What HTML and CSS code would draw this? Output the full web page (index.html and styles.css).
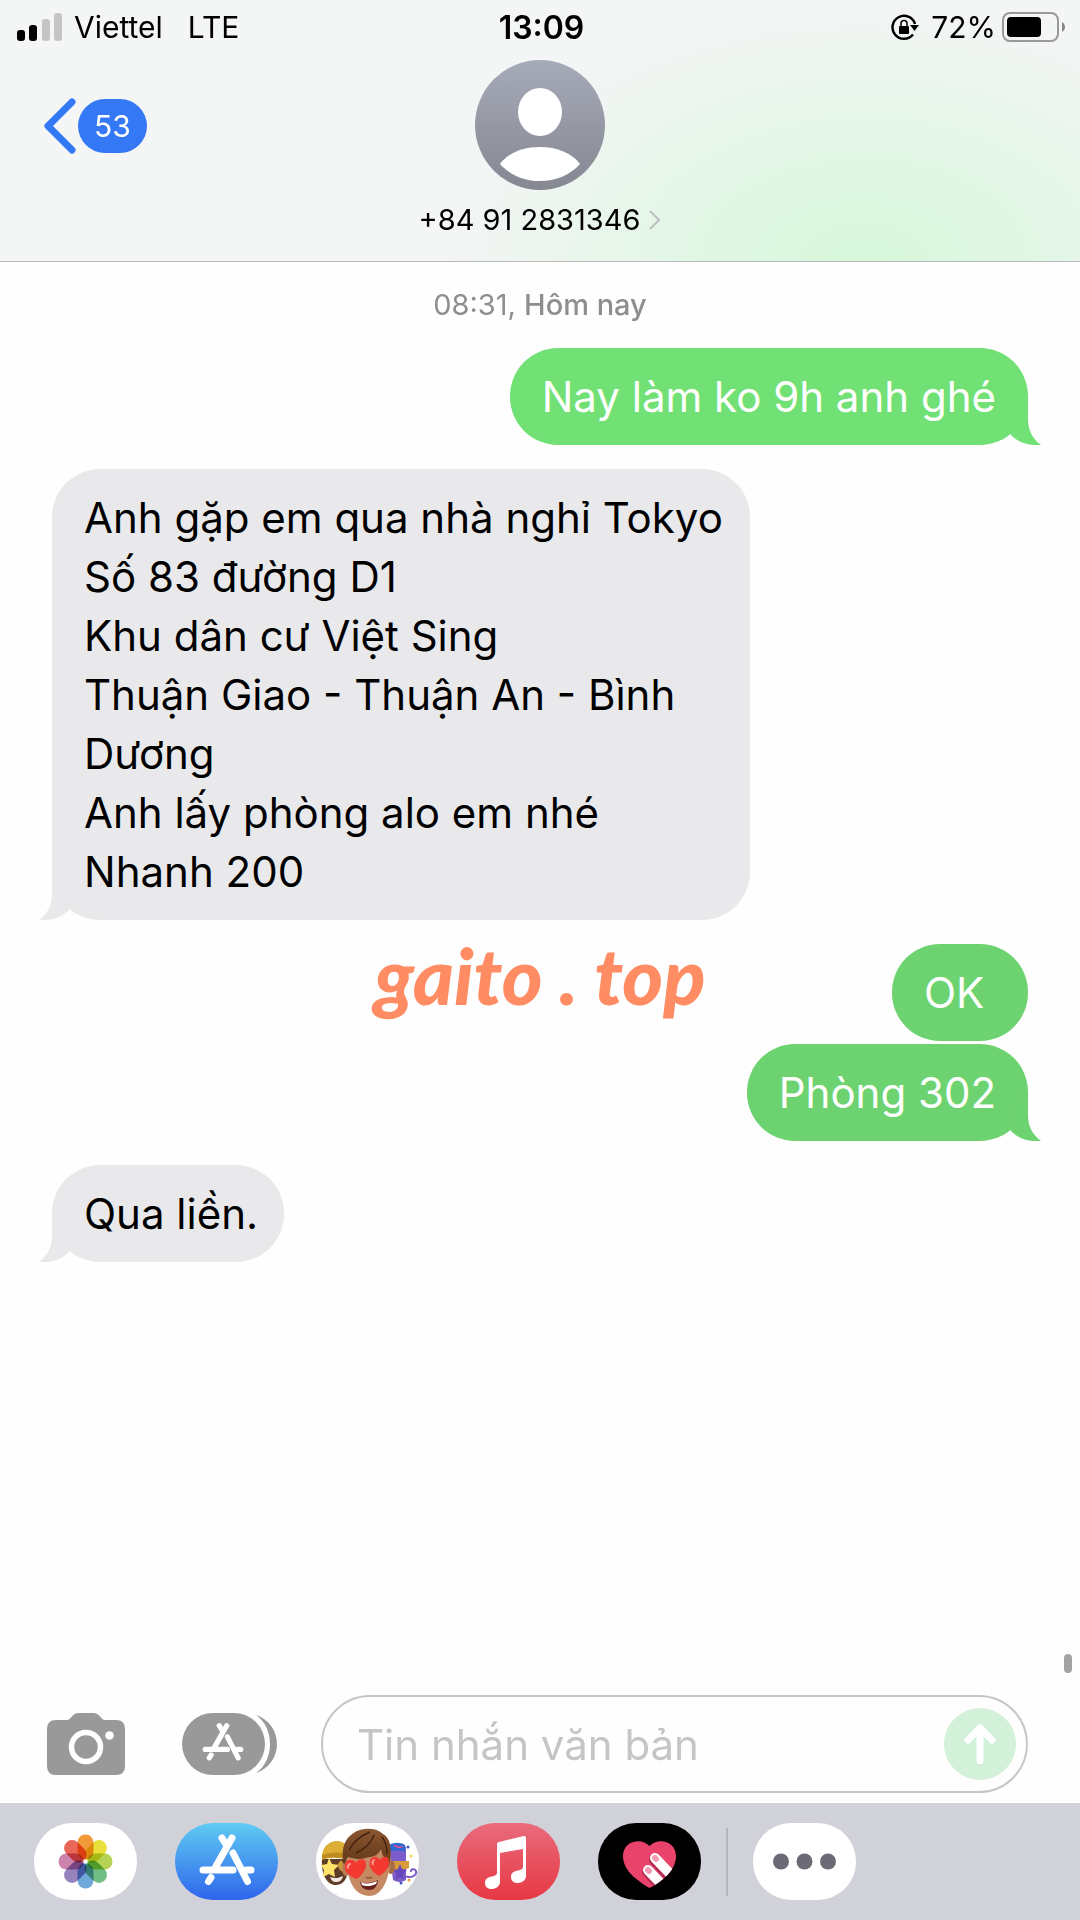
FILE: index.html
```
<!DOCTYPE html>
<html lang="vi">
<head>
  <meta charset="UTF-8">
  <title>Tin nhắn</title>
  <meta name="viewport" content="width=device-width, initial-scale=1">
  <link rel="stylesheet" href="styles.css">
</head>
<body>
  <header class="header">
    <div class="status-bar">
      <div class="status-left">
        <svg width="46" height="28" viewBox="0 0 46 28" aria-hidden="true">
          <rect x="0" y="17" width="8" height="11" rx="3"/>
          <rect x="12" y="12" width="8" height="16" rx="3"/>
          <rect x="25" y="6" width="8" height="22" rx="3" fill="#c5c5c5"/>
          <rect x="37" y="0" width="8" height="28" rx="3" fill="#c5c5c5"/>
        </svg>
        <span>Viettel</span>
        <span class="network">LTE</span>
      </div>
      <time class="clock">13:09</time>
      <div class="status-right">
        <svg width="28" height="28" viewBox="0 0 28 28" aria-hidden="true">
          <path d="M24 11A11.500 11.500 0 1 0 22 21.500" fill="none" stroke="#000" stroke-width="2.500"/>
          <path d="M19 12h9l-4.500 6z"/>
          <rect x="8" y="13" width="10" height="8" rx="1"/>
          <path d="M10 13v-2.500a3 3 0 0 1 6 0V13" fill="none" stroke="#000" stroke-width="1.500"/>
        </svg>
        <span class="percent">72%</span>
        <svg width="64" height="32" viewBox="0 0 64 32" aria-hidden="true">
          <rect x="1" y="2" width="55" height="28" rx="7" fill="none" stroke="#999" stroke-width="2"/>
          <rect x="5" y="6" width="34" height="20" rx="4"/>
          <path d="M60 11c4 2 4 8 0 10z" fill="#888"/>
        </svg>
      </div>
    </div>
    <nav class="nav">
      <a class="back" href="#" aria-label="Quay lại, 53 tin chưa đọc">
        <svg width="34" height="56" viewBox="0 0 34 56" aria-hidden="true">
          <path d="M28 4L4 28l24 24" fill="none" stroke="#3478f6" stroke-width="7" stroke-linecap="round" stroke-linejoin="round"/>
        </svg>
        <span class="badge">53</span>
      </a>
      <a class="contact" href="#">
        <svg width="130" height="130" viewBox="0 0 130 130" aria-hidden="true">
          <defs>
            <linearGradient id="avatar" x1="0" y1="0" x2="0" y2="1">
              <stop offset="0" stop-color="#a6abb8"/>
              <stop offset="1" stop-color="#858791"/>
            </linearGradient>
          </defs>
          <circle cx="65" cy="65" r="65" fill="url(#avatar)"/>
          <ellipse cx="65" cy="52" rx="22" ry="24" fill="#fff"/>
          <path d="M25 104C33 93 48 87 65 87s32 6 40 17c-10 11-24 17-40 17s-30-6-40-17z" fill="#fff"/>
        </svg>
        <span class="contact-name">+84 91 2831346
          <svg width="12" height="22" viewBox="0 0 12 22" aria-hidden="true">
            <path d="M1 2l9 9-9 9" fill="none" stroke="#bcc1bf" stroke-width="2"/>
          </svg>
        </span>
      </a>
    </nav>
  </header>

  <main class="messages">
    <p class="date">08:31, <b>Hôm nay</b></p>
    <div class="bubble sent">Nay làm ko 9h anh ghé
      <svg class="tail" width="40" height="48" viewBox="0 0 40 48" aria-hidden="true"><path d="M20 0h7v22c0 12 5 20 13 26-14 1-23-3-30-10l-2-8z"/></svg>
    </div>
    <div class="bubble received">Anh gặp em qua nhà nghỉ Tokyo<br>Số 83 đường D1<br>Khu dân cư Việt Sing<br>Thuận Giao - Thuận An - Bình Dương<br>Anh lấy phòng alo em nhé<br>Nhanh 200
      <svg class="tail" width="40" height="48" viewBox="0 0 40 48" aria-hidden="true"><path d="M20 0h-7v22c0 12-5 20-13 26 14 1 23-3 30-10l2-8z"/></svg>
    </div>
    <div class="sent-group">
      <div class="bubble sent darker">OK</div>
      <div class="bubble sent darker">Phòng 302
        <svg class="tail" width="40" height="48" viewBox="0 0 40 48" aria-hidden="true"><path d="M20 0h7v22c0 12 5 20 13 26-14 1-23-3-30-10l-2-8z"/></svg>
      </div>
      <span class="watermark">gaito . top</span>
    </div>
    <div class="bubble received">Qua liền.
      <svg class="tail" width="40" height="48" viewBox="0 0 40 48" aria-hidden="true"><path d="M20 0h-7v22c0 12-5 20-13 26 14 1 23-3 30-10l2-8z"/></svg>
    </div>
    <span class="scroll-thumb"></span>
  </main>

  <form class="composer">
    <button class="icon-button" type="button" aria-label="Máy ảnh">
      <svg width="78" height="62" viewBox="0 0 78 62">
        <path d="M9 7h11c4 0 5-7 12-7h14c7 0 8 7 12 7h11q9 0 9 9v37q0 9-9 9H9q-9 0-9-9V16q0-9 9-9z" fill="#999"/>
        <circle cx="39" cy="34" r="14.500" fill="none" stroke="#fff" stroke-width="5.500"/>
        <circle cx="62.500" cy="22.500" r="4.300" fill="#fff"/>
      </svg>
    </button>
    <button class="icon-button" type="button" aria-label="Ứng dụng">
      <svg width="95" height="62" viewBox="0 0 95 62">
        <rect width="83" height="62" rx="31" fill="#999"/>
        <path d="M74 2c12 4 21 15 21 29s-9 25-21 29c9-6 14-17 14-29S83 8 74 2z" fill="#999"/>
        <g transform="translate(2.500 1.600) scale(.74)" fill="none" stroke="#fff" stroke-width="7" stroke-linecap="round" stroke-linejoin="round">
          <path d="M47 15l5 8M57 15L40 45M28 47h30M71 47h5M36 54.500l-2.500 4"/>
          <path d="M58 30l14.500 28.500"/>
        </g>
      </svg>
    </button>
    <div class="field">
      <input type="text" placeholder="Tin nhắn văn bản" aria-label="Tin nhắn văn bản">
      <button class="send" type="submit" aria-label="Gửi">
        <svg width="32" height="40" viewBox="0 0 32 40">
          <path d="M16 37V5M4 16L16 4l12 12" fill="none" stroke="#fff" stroke-width="7" stroke-linecap="round" stroke-linejoin="round"/>
        </svg>
      </button>
    </div>
  </form>

  <footer class="dock">
    <button class="app" type="button" aria-label="Ảnh">
      <svg viewBox="0 0 103 77">
        <rect width="103" height="77" rx="38" fill="#fff"/>
        <g class="petals" transform="translate(51.500 38.500)">
          <rect x="-8" y="-27" width="16" height="25" rx="8" fill="#f09b37"/>
          <rect x="-8" y="-27" width="16" height="25" rx="8" fill="#e9e03b" transform="rotate(45)"/>
          <rect x="-8" y="-27" width="16" height="25" rx="8" fill="#b5d254" transform="rotate(90)"/>
          <rect x="-8" y="-27" width="16" height="25" rx="8" fill="#72bd84" transform="rotate(135)"/>
          <rect x="-8" y="-27" width="16" height="25" rx="8" fill="#6fa8d9" transform="rotate(180)"/>
          <rect x="-8" y="-27" width="16" height="25" rx="8" fill="#9583bd" transform="rotate(225)"/>
          <rect x="-8" y="-27" width="16" height="25" rx="8" fill="#cd83ad" transform="rotate(270)"/>
          <rect x="-8" y="-27" width="16" height="25" rx="8" fill="#e96758" transform="rotate(315)"/>
        </g>
      </svg>
    </button>
    <button class="app" type="button" aria-label="App Store">
      <svg viewBox="0 0 103 77">
        <defs>
          <linearGradient id="store" x1="0" y1="0" x2="0" y2="1">
            <stop offset="0" stop-color="#5fcbf3"/>
            <stop offset="1" stop-color="#2f65ec"/>
          </linearGradient>
        </defs>
        <rect width="103" height="77" rx="38" fill="url(#store)"/>
        <g fill="none" stroke="#fff" stroke-width="7" stroke-linecap="round" stroke-linejoin="round">
          <path d="M47 15l5 8M57 15L40 45M28 47h30M71 47h5M36 54.500l-2.500 4"/>
          <path d="M58 30l14.500 28.500"/>
        </g>
      </svg>
    </button>
    <button class="app" type="button" aria-label="Memoji">
      <svg viewBox="0 0 103 77">
        <defs>
          <linearGradient id="hair" x1="0" y1="0" x2="0" y2="1">
            <stop offset="0" stop-color="#8a5630"/>
            <stop offset="1" stop-color="#5e3417"/>
          </linearGradient>
        </defs>
        <rect width="103" height="77" rx="38" fill="#fff"/>
        <!-- beanie face -->
        <path d="M6 36c-1 16 5 26 14 26s13-9 13-26z" fill="#5f3c26"/>
        <path d="M6 34c0-10 7-16 15-16 7 0 12 5 12 14v6c-9-4-18-4-27-1z" fill="#dcae35"/>
        <path d="M6 32c9-3 18-3 27-1v6c-9-3-18-3-27-1z" fill="#c08c20"/>
        <path d="M13 35l3 6 7 1-5 5 1 7-6-3-6 3 1-7-3-5 6-1z" fill="#ffe36a"/>
        <path d="M25 37l3 4 5 1v7l-5 1-4-3-3-5z" fill="#c89a3c"/>
        <path d="M14 54c5 2 9 1 13-1-1 5-4 6-7 6s-5-2-6-5z" fill="#f4e9e2"/>
        <!-- purple robot -->
        <path d="M73 24c5-4 13-4 17 0v33c-3 2-8 3-13 0z" fill="#7c5ccb"/>
        <path d="M73 22c5-3 12-3 16 0v7c-5-2-11-2-16 0z" fill="#2d6bd3"/>
        <path d="M78 22c3 3 6 3 9 1" fill="none" stroke="#df4b8e" stroke-width="1.500"/>
        <path d="M73 38h20v7c-6 3-14 2-20 1z" fill="#d99a3b"/>
        <path d="M84 41l2 5 5 1-4 4 1 6-4-3-5 3 2-6-4-4 5-1z" fill="#6747bd"/>
        <path d="M88 53c8 3 13-1 12-5-1-3-6-2-5 1" fill="none" stroke="#7c5ccb" stroke-width="2"/>
        <circle cx="92" cy="24" r="1.500" fill="#3e54cc"/>
        <circle cx="95" cy="33" r="1.500" fill="#f3d84c"/>
        <circle cx="85" cy="60" r="1.500" fill="#3e54cc"/>
        <circle cx="93" cy="57" r="1.500" fill="#ef9c36"/>
        <!-- main face -->
        <ellipse cx="30" cy="46" rx="4" ry="7" fill="#b87b54"/>
        <ellipse cx="75" cy="44" rx="4" ry="7" fill="#a96b46"/>
        <path d="M30 28c0 24 5 44 23 45 16 0 22-24 22-45z" fill="#c58a63"/>
        <path d="M28 42c-3-13-1-24 7-30 9-8 25-8 32-1 9 5 9 19 6 32l-2 2c0-6-2-10-4-12l-2-6c-4 5-7 7-12 7-8 3-15 2-21 0-2 3-3 5-4 8z" fill="url(#hair)"/>
        <path d="M33 27c5-9 11-14 21-18M40 30c9-4 15-10 18-18M66 14c4 5 5 10 5 17" fill="none" stroke="#442411" stroke-width="1.500"/>
        <path d="M41 56c-8-2-13-8-12-14s8-7 11-2c2-5 9-5 10 0 1 6-4 12-9 16z" fill="#f23a31"/>
        <path d="M63 53c-7-4-11-10-9-15 2-6 8-5 10-1 3-5 9-4 9 1 1 6-4 12-10 15z" fill="#f23a31"/>
        <path d="M34 41c-2 1-3 3-2 4M58 37c-2 2-2 3-1 4" fill="none" stroke="#ff9c90" stroke-width="2" stroke-linecap="round"/>
        <path d="M50 54q3 2 6 0" fill="none" stroke="#98613f" stroke-width="2"/>
        <path d="M44 59c6 2 12 1 18-2-1 7-4 10-9 10s-8-3-9-8z" fill="#67211e"/>
        <path d="M45 59c6 3 11 1 16-1l-1 3c-4 2-10 3-14 1z" fill="#fff"/>
      </svg>
    </button>
    <button class="app" type="button" aria-label="Nhạc">
      <svg viewBox="0 0 103 77">
        <defs>
          <linearGradient id="music" x1="0" y1="0" x2="0" y2="1">
            <stop offset="0" stop-color="#e96b7c"/>
            <stop offset="1" stop-color="#e73843"/>
          </linearGradient>
        </defs>
        <rect width="103" height="77" rx="38" fill="url(#music)"/>
        <path d="M40 21q0-2 2-2l25-6q2 0 2 2v38c0 4-4 7-8 7s-7-2-7-6c0-5 4-6 9-7q3-1 3-3V26l-23 4v29c0 4-4 7-8 7s-7-2-7-6c0-5 4-6 9-7q3-1 3-3z" fill="#fff"/>
      </svg>
    </button>
    <button class="app" type="button" aria-label="Digital Touch">
      <svg viewBox="0 0 103 77">
        <defs>
          <clipPath id="heart">
            <path d="M51.500 23C60 14 78 18 78 33c0 14-13 25-26.500 32C38 57 25 47 25 33c0-15 18-19 26.500-10z"/>
          </clipPath>
        </defs>
        <rect width="103" height="77" rx="38"/>
        <g clip-path="url(#heart)" stroke-linecap="round">
          <rect x="20" y="10" width="65" height="60" fill="#e9426b"/>
          <path d="M56 37l24 26M49 49l20 22" stroke="#b52d53" stroke-width="10"/>
          <path d="M57 35l24 25M50 47l20 21" stroke="#fff" stroke-width="10"/>
          <path d="M57 35l1 1M50 47l1 1" stroke="#f29bb3" stroke-width="6"/>
        </g>
      </svg>
    </button>
    <span class="divider"></span>
    <button class="app" type="button" aria-label="Thêm">
      <svg viewBox="0 0 103 77">
        <rect width="103" height="77" rx="38" fill="#fff"/>
        <g fill="#6c6b75">
          <circle cx="28" cy="38.500" r="8"/>
          <circle cx="51.500" cy="38.500" r="8"/>
          <circle cx="75" cy="38.500" r="8"/>
        </g>
      </svg>
    </button>
  </footer>
</body>
</html>
```
FILE: styles.css
```
* {
  box-sizing: border-box;
}
body {
  margin: 0;
  min-height: 100vh;
  display: flex;
  flex-direction: column;
  background: #fefefe;
  color: #000;
  font-family: Inter, "Noto Sans", sans-serif;
}
svg {
  display: block;
  flex: none;
}
a {
  color: inherit;
  text-decoration: none;
}
button {
  border: none;
  padding: 0;
  background: none;
  cursor: pointer;
}

/* header */
.header {
  border-bottom: 1px solid #b8bab9;
  background: radial-gradient(ellipse 420px 260px at 80% 100%, #d7f8db 0%, #e1f6e5 40%, #f4f5f5 100%);
}
.status-bar {
  height: 54px;
  padding: 0 14px 0 17px;
  display: grid;
  grid-template-columns: 1fr auto 1fr;
  align-items: center;
  font-size: 30px;
}
.status-left,
.status-right {
  display: flex;
  align-items: center;
}
.status-left {
  gap: 11px;
}
.network {
  margin-left: 14px;
}
.clock {
  font-size: 32px;
  font-weight: 600;
}
.status-right {
  justify-content: flex-end;
}
.percent {
  margin: 0 6px 0 12px;
}
.nav {
  padding: 6px 44px 23px;
  display: grid;
  grid-template-columns: 1fr auto 1fr;
  align-items: start;
}
.back {
  margin-top: 38px;
  display: flex;
  align-items: center;
}
.badge {
  padding: 0 16px;
  border-radius: 27px;
  background: #3478f6;
  color: #fff;
  font-size: 30px;
  line-height: 54px;
}
.contact {
  display: flex;
  flex-direction: column;
  align-items: center;
  gap: 12px;
}
.contact-name {
  display: flex;
  align-items: center;
  gap: 9px;
  font-size: 29px;
  line-height: 36px;
}

/* conversation */
.messages {
  position: relative;
  flex: 1;
  padding: 24px 52px;
  display: flex;
  flex-direction: column;
  align-items: flex-start;
  gap: 24px;
}
.date {
  align-self: center;
  margin: 0;
  color: #8e8e90;
  font-size: 29px;
  line-height: 38px;
}
.date b {
  font-weight: 500;
}
.bubble {
  position: relative;
  min-width: 136px;
  max-width: 698px;
  padding: 19px 32px;
  border-radius: 48px;
  font-size: 42px;
  line-height: 59px;
}
.sent {
  align-self: flex-end;
  background: #72e175;
  color: #fff;
}
.darker {
  background: #6dd370;
}
.received {
  padding-right: 26px;
  background: #e9e9eb;
}
.tail {
  position: absolute;
  right: -13px;
  bottom: 0;
  fill: #72e175;
}
.darker .tail {
  fill: #6dd370;
}
.received .tail {
  right: auto;
  left: -13px;
  fill: #e9e9eb;
}
.sent-group {
  position: relative;
  align-self: stretch;
  display: flex;
  flex-direction: column;
  gap: 3px;
}
.watermark {
  position: absolute;
  top: -14px;
  left: 0;
  right: 0;
  text-align: center;
  color: #ff8c63;
  font-family: Lato, sans-serif;
  font-size: 78px;
  font-style: italic;
  font-weight: 900;
  line-height: 90px;
}
.scroll-thumb {
  position: absolute;
  right: 8px;
  bottom: 0;
  width: 8px;
  height: 19px;
  border-radius: 4px;
  background: #a3a3a3;
}

/* input row */
.composer {
  padding: 22px 52px 10px 47px;
  display: flex;
  align-items: center;
}
.icon-button {
  margin-right: 57px;
}
.icon-button + .field {
  margin-left: -13px;
}
.field {
  flex: 1;
  min-width: 0;
  padding: 0 10px 0 34px;
  border: 2px solid #c6c6c6;
  border-radius: 49px;
  display: flex;
  align-items: center;
}
.field input {
  flex: 1;
  min-width: 0;
  height: 94px;
  padding: 0;
  border: none;
  outline: none;
  background: none;
  font: inherit;
  font-size: 42px;
}
.field input::placeholder {
  color: #c5c5c7;
}
.send {
  width: 72px;
  height: 72px;
  border-radius: 50%;
  background: #d3f1d8;
  display: flex;
  align-items: center;
  justify-content: center;
}

/* app strip */
.dock {
  padding: 20px 34px;
  display: flex;
  align-items: center;
  gap: 38px;
  background: #d1d1da;
}
.app {
  flex: none;
  width: 103px;
}
.petals rect {
  mix-blend-mode: multiply;
}
.divider {
  width: 2px;
  height: 68px;
  margin: 0 -13px;
  background: #b4b4bb;
}
```
